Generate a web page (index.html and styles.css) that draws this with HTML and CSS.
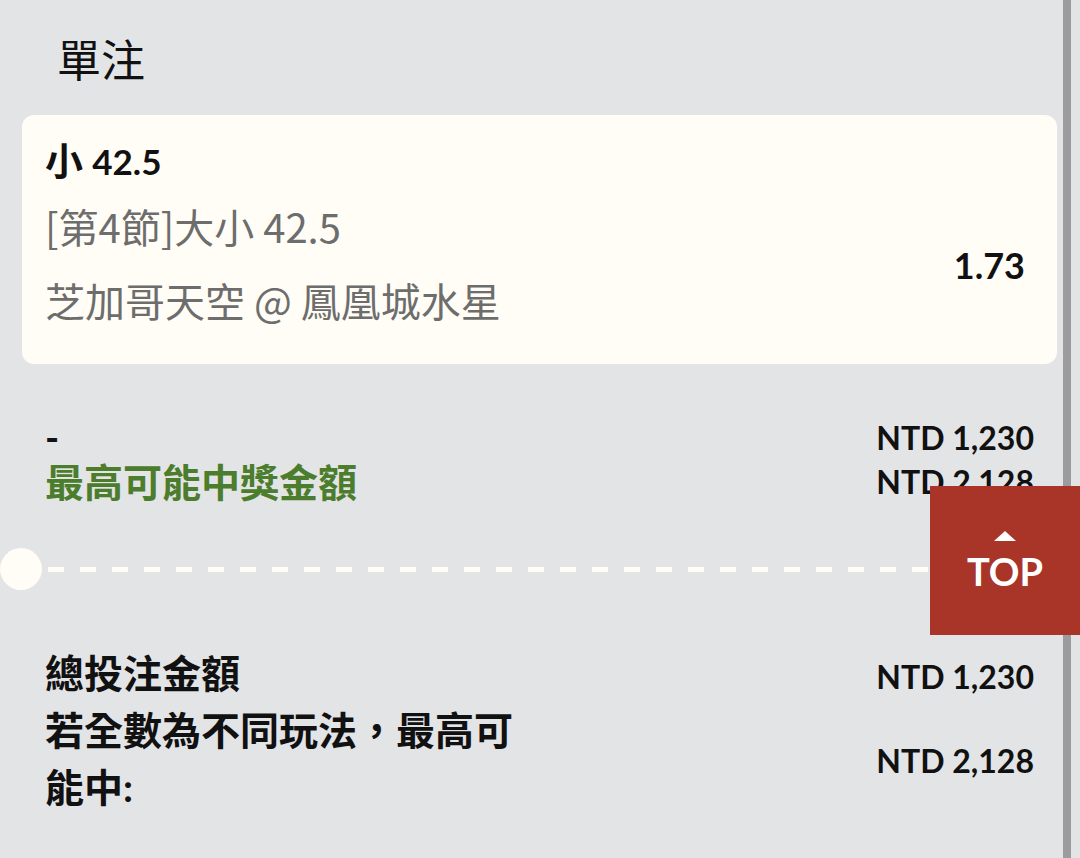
FILE: index.html
```html
<!DOCTYPE html>
<html lang="zh-Hant">
<head>
  <meta charset="UTF-8">
  <meta name="viewport" content="width=device-width, initial-scale=1.0">
  <title>單注</title>
  <link rel="stylesheet" href="styles.css">
</head>
<body>
  <div class="screen">
    <div class="panel">
      <h1 class="title">單注</h1>

      <div class="bet-card">
        <div class="bet-pick">小 <span class="num">42.5</span></div>
        <div class="bet-body">
          <div class="bet-info">
            <div class="bet-market">[第4節]大小 42.5</div>
            <div class="bet-match">芝加哥天空 @ 鳳凰城水星</div>
          </div>
          <div class="bet-odds">1.73</div>
        </div>
      </div>

      <div class="stake">
        <div class="stake-labels">
          <div class="stake-input">-</div>
          <div class="stake-win">最高可能中獎金額</div>
        </div>
        <div class="stake-values">
          <div class="amount">NTD 1,230</div>
          <div class="amount">NTD 2,128</div>
        </div>
      </div>

      <div class="divider">
        <span class="notch"></span>
        <span class="dashes"></span>
      </div>

      <div class="summary">
        <div class="summary-row">
          <div class="summary-label">總投注金額</div>
          <div class="amount">NTD 1,230</div>
        </div>
        <div class="summary-row">
          <div class="summary-label">若全數為不同玩法，最高可能中:</div>
          <div class="amount">NTD 2,128</div>
        </div>
      </div>
    </div>
    <div class="rail"></div>
  </div>

  <a class="to-top" href="#">
    <span class="to-top__arrow"></span>
    <span class="to-top__label">TOP</span>
  </a>
</body>
</html>
```

FILE: styles.css
```css
* {
  margin: 0;
  padding: 0;
  box-sizing: border-box;
}

body {
  font-family: Lato, "Noto Sans CJK TC", sans-serif;
  background-color: #e3e4e6;
  color: #111111;
  height: 100vh;
  overflow: hidden;
}

.screen {
  display: flex;
  height: 100%;
  padding-right: 9px;
}

.panel {
  flex: 1;
}

.rail {
  width: 8px;
  background-color: #9c9c9e;
}

.title {
  font-family: "Noto Sans CJK TC", sans-serif;
  font-size: 44px;
  font-weight: 400;
  line-height: 60px;
  padding: 28px 0 0 57px;
  height: 115px;
}

/* tarjeta de la apuesta */
.bet-card {
  margin: 0 6px 0 22px;
  height: 249px;
  padding: 16px 32px 0 23px;
  background-color: #fffdf5;
  border-radius: 12px;
}

.bet-pick {
  font-size: 38px;
  font-weight: 700;
  line-height: 58px;
}

.bet-pick .num {
  font-size: 35px;
}

.bet-body {
  display: flex;
  align-items: center;
}

.bet-info {
  flex: 1;
  font-family: "Noto Sans CJK TC", sans-serif;
  font-size: 40px;
  color: #6d6d6d;
}

.bet-market,
.bet-match {
  line-height: 72px;
}

.bet-match {
  margin-top: 2px;
}

.bet-odds {
  font-size: 36px;
  font-weight: 700;
  margin-top: 4px;
}

.stake {
  display: flex;
  justify-content: space-between;
  padding: 52px 29px 0 45px;
  height: 184px;
}

.stake-input {
  font-size: 38px;
  font-weight: 700;
  line-height: 42px;
}

.stake-win {
  font-size: 39px;
  font-weight: 700;
  color: #4b7d2d;
  line-height: 48px;
}

.stake-values .amount {
  line-height: 44px;
}

.amount {
  font-size: 32px;
  font-weight: 700;
  text-align: right;
  white-space: nowrap;
}

.divider {
  display: flex;
  align-items: center;
  height: 42px;
}

.notch {
  width: 42px;
  height: 42px;
  border-radius: 50%;
  background-color: #fffdf5;
}

.dashes {
  flex: 1;
  height: 5px;
  margin-left: 6px;
  background: repeating-linear-gradient(90deg, #fffdf5 0 16px, transparent 16px 32px);
}

.summary {
  padding: 55px 29px 0 45px;
}

.summary-row {
  display: flex;
  justify-content: space-between;
  align-items: center;
  gap: 40px;
}

.summary-row .amount {
  margin-top: 2px;
}

.summary-row:first-child .amount {
  margin-top: 6px;
}

.summary-label {
  width: 472px;
  font-size: 39px;
  font-weight: 700;
  line-height: 57px;
}

/* TOP flotante */
.to-top {
  position: fixed;
  right: 0;
  top: 486px;
  width: 150px;
  height: 149px;
  background-color: #a93428;
  color: #ffffff;
  text-decoration: none;
  display: flex;
  flex-direction: column;
  align-items: center;
  justify-content: center;
  gap: 10px;
}

.to-top__arrow {
  width: 0;
  height: 0;
  border-left: 11px solid transparent;
  border-right: 11px solid transparent;
  border-bottom: 10px solid #ffffff;
}

.to-top__label {
  font-size: 38px;
  font-weight: 700;
  line-height: 40px;
}
```
